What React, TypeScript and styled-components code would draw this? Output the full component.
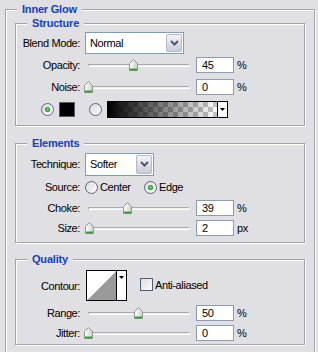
import React from "react";
import styled, { createGlobalStyle } from "styled-components";

const GlobalStyle = createGlobalStyle`
  html, body { margin: 0; padding: 0; background: #e0dfe3; }
  body {
    font-family: "Liberation Sans", Arial, sans-serif;
    font-size: 11px;
    letter-spacing: -0.4px;
    color: #000;
  }
`;

const Panel = styled.div`
  width: 318px;
  height: 352px;
  overflow: hidden;
  padding-top: 3px;
  box-sizing: border-box;
`;

const Group = styled.fieldset<{ $outer?: boolean; $gap?: number; $bottom?: number }>`
  margin: ${p => p.$gap ?? 0}px 0 0 ${p => (p.$outer ? 5 : 0)}px;
  width: ${p => (p.$outer ? 310 : 290)}px;
  min-inline-size: 0;
  box-sizing: border-box;
  padding: ${p => (p.$outer ? "0 9px 40px 9px" : `2px 0 ${p.$bottom ?? 4}px 0`)};
  border: 1px solid #a3a2a8;
  box-shadow: inset 1px 1px 0 #fff, 1px 1px 0 #fff;
`;

const Legend = styled.legend<{ $outer?: boolean }>`
  margin-left: ${p => (p.$outer ? 2 : 11)}px;
  padding: 0 5px;
  font: bold 11px/13px "Liberation Sans", Arial, sans-serif;
  letter-spacing: -0.2px;
  color: #1440c4;
  background: #e0dfe3;
`;

const Row = styled.div<{ $h: number }>`
  display: grid;
  grid-template-columns: 64px 1fr;
  column-gap: 5px;
  align-items: center;
  height: ${p => p.$h}px;
`;

const Label = styled.span`
  text-align: right;
  white-space: nowrap;
`;

const Controls = styled.div`
  display: flex;
  align-items: center;
`;

const Combo = styled.div<{ $w: number; $h: number }>`
  display: flex;
  align-items: stretch;
  width: ${p => p.$w}px;
  height: ${p => p.$h}px;
  box-sizing: border-box;
  border: 1px solid #7f9db9;
  background: #fff;
  padding: 1px;
`;

const ComboText = styled.span`
  flex: 1;
  display: flex;
  align-items: center;
  padding-left: 3px;
`;

const ComboButton = styled.span`
  width: 16px;
  display: flex;
  align-items: center;
  justify-content: center;
  box-sizing: border-box;
  border: 1px solid #b6b9c9;
  border-radius: 2px;
  background: linear-gradient(#f3f3f7, #c9cbd8);
`;

const SliderBox = styled.div`
  position: relative;
  width: 106px;
  height: 12px;
`;

const Track = styled.div`
  position: absolute;
  left: 3px;
  top: 5px;
  width: 100px;
  height: 1px;
  border: 1px solid #a9a9ad;
  border-right-color: #fff;
  border-bottom-color: #fff;
  border-radius: 2px;
  background: #eeeef0;
`;

const ThumbWrap = styled.div`
  position: absolute;
  top: 0;
  width: 9px;
  height: 12px;
`;

const ValueBox = styled.div`
  width: 38px;
  height: 16px;
  box-sizing: border-box;
  margin-left: 5px;
  border: 1px solid #8d9bb0;
  background: #fff;
  padding-left: 5px;
  line-height: 14px;
`;

const Unit = styled.span`
  margin-left: 3px;
`;

const ColorRow = styled.div`
  display: flex;
  align-items: center;
  height: 22px;
  padding-left: 25px;
`;

const Swatch = styled.div`
  width: 16px;
  height: 15px;
  margin-left: 5px;
  margin-right: 14px;
  box-sizing: border-box;
  border: 1px solid #5a5a5a;
  background: #000;
`;

const GradientBox = styled.div`
  display: flex;
  width: 121px;
  height: 17px;
  margin-left: 5px;
  box-sizing: border-box;
  border: 1px solid #000;
`;

const GradientFill = styled.div`
  flex: 1;
  background:
    linear-gradient(to right, #000, rgba(0, 0, 0, 0)),
    repeating-conic-gradient(#c4c4c4 0 25%, #fff 0 50%) 0 0 / 10px 10px;
`;

const ArrowCell = styled.div<{ $top?: boolean }>`
  width: 9px;
  display: flex;
  justify-content: center;
  align-items: ${p => (p.$top ? "flex-start" : "center")};
  padding-top: ${p => (p.$top ? 5 : 0)}px;
  border-left: 1px solid #000;
  background: #fff;
`;

const Option = styled.label<{ $w?: number }>`
  display: flex;
  align-items: center;
  gap: 2px;
  width: ${p => (p.$w ? `${p.$w}px` : "auto")};
`;

const ContourBox = styled.div`
  display: flex;
  width: 41px;
  height: 31px;
  margin-left: 1px;
  box-sizing: border-box;
  border: 1px solid #000;
  background: #fff;
`;

const ContourCurve = styled.div`
  flex: 1;
  background: linear-gradient(to top left, #9a9a9a 50%, #fff 50%);
`;

const CheckOption = styled.label`
  display: flex;
  align-items: center;
  gap: 2px;
  margin-left: 13px;
  margin-top: -2px;
`;

const Chevron = () => (
  <svg width="9" height="6" viewBox="0 0 9 6">
    <path d="M1 1 L4.5 4.5 L8 1" fill="none" stroke="#4d5670" strokeWidth="2" />
  </svg>
);

const SmallArrow = () => (
  <svg width="5" height="3" viewBox="0 0 5 3">
    <path d="M0 0 H5 L2.5 3 Z" fill="#000" />
  </svg>
);

const Radio = ({ checked }: { checked?: boolean }) => (
  <svg width="13" height="13" viewBox="0 0 13 13">
    <defs>
      <linearGradient id="radioFill" x1="0" y1="0" x2="1" y2="1">
        <stop offset="0" stopColor="#d8d8dc" />
        <stop offset="1" stopColor="#ffffff" />
      </linearGradient>
      <radialGradient id="radioDot">
        <stop offset="0" stopColor="#7ad67a" />
        <stop offset="1" stopColor="#2c952c" />
      </radialGradient>
    </defs>
    <circle cx="6.5" cy="6.5" r="6" fill="url(#radioFill)" stroke="#56657f" />
    {checked && <circle cx="6.5" cy="6.5" r="2.6" fill="url(#radioDot)" />}
  </svg>
);

const Checkbox = () => (
  <svg width="13" height="13" viewBox="0 0 13 13">
    <defs>
      <linearGradient id="checkFill" x1="0" y1="0" x2="1" y2="1">
        <stop offset="0" stopColor="#dcdce0" />
        <stop offset="1" stopColor="#ffffff" />
      </linearGradient>
    </defs>
    <rect x="0.5" y="0.5" width="12" height="12" fill="url(#checkFill)" stroke="#4e5d78" />
  </svg>
);

const Thumb = () => (
  <svg width="9" height="12" viewBox="0 0 9 12">
    <defs>
      <linearGradient id="thumbFill" x1="0" y1="0" x2="1" y2="0">
        <stop offset="0" stopColor="#ffffff" />
        <stop offset="1" stopColor="#c9d2c9" />
      </linearGradient>
    </defs>
    <path d="M0.5 4.5 L4.5 0.5 L8.5 4.5 V11.5 H0.5 Z" fill="url(#thumbFill)" stroke="#8f978f" />
    <rect x="1" y="9.5" width="7" height="2" fill="#3c9d3c" />
  </svg>
);

// pos = thumb offset along the 100px track, defaults to the value itself
const SliderRow = ({
  label,
  value,
  pos,
  unit = "%",
  h = 22,
}: {
  label: string;
  value: number;
  pos?: number;
  unit?: string;
  h?: number;
}) => (
  <Row $h={h}>
    <Label>{label}</Label>
    <Controls>
      <SliderBox>
        <Track />
        <ThumbWrap style={{ left: (pos ?? value) - 1 }}>
          <Thumb />
        </ThumbWrap>
      </SliderBox>
      <ValueBox>{value}</ValueBox>
      <Unit>{unit}</Unit>
    </Controls>
  </Row>
);

export default function App() {
  return (
    <>
      <GlobalStyle />
      <Panel>
        <Group $outer>
          <Legend $outer>Inner Glow</Legend>

          <Group $gap={1} $bottom={5}>
            <Legend>Structure</Legend>
            <Row $h={22}>
              <Label>Blend Mode:</Label>
              <Controls>
                <Combo $w={99} $h={22}>
                  <ComboText>Normal</ComboText>
                  <ComboButton>
                    <Chevron />
                  </ComboButton>
                </Combo>
              </Controls>
            </Row>
            <SliderRow label="Opacity:" value={45} />
            <SliderRow label="Noise:" value={0} />
            <ColorRow>
              <Radio checked />
              <Swatch />
              <Radio />
              <GradientBox>
                <GradientFill />
                <ArrowCell>
                  <SmallArrow />
                </ArrowCell>
              </GradientBox>
            </ColorRow>
          </Group>

          <Group $gap={11} $bottom={4}>
            <Legend>Elements</Legend>
            <Row $h={24}>
              <Label>Technique:</Label>
              <Controls>
                <Combo $w={69} $h={23}>
                  <ComboText>Softer</ComboText>
                  <ComboButton>
                    <Chevron />
                  </ComboButton>
                </Combo>
              </Controls>
            </Row>
            <Row $h={22}>
              <Label>Source:</Label>
              <Controls>
                <Option $w={59}>
                  <Radio />
                  <span>Center</span>
                </Option>
                <Option>
                  <Radio checked />
                  <span>Edge</span>
                </Option>
              </Controls>
            </Row>
            <SliderRow label="Choke:" value={39} h={20} />
            <SliderRow label="Size:" value={2} pos={1} unit="px" h={20} />
          </Group>

          <Group $gap={10} $bottom={1}>
            <Legend>Quality</Legend>
            <Row $h={35}>
              <Label>Contour:</Label>
              <Controls>
                <ContourBox>
                  <ContourCurve />
                  <ArrowCell $top>
                    <SmallArrow />
                  </ArrowCell>
                </ContourBox>
                <CheckOption>
                  <Checkbox />
                  <span>Anti-aliased</span>
                </CheckOption>
              </Controls>
            </Row>
            <SliderRow label="Range:" value={50} h={20} />
            <SliderRow label="Jitter:" value={0} h={20} />
          </Group>
        </Group>
      </Panel>
    </>
  );
}
